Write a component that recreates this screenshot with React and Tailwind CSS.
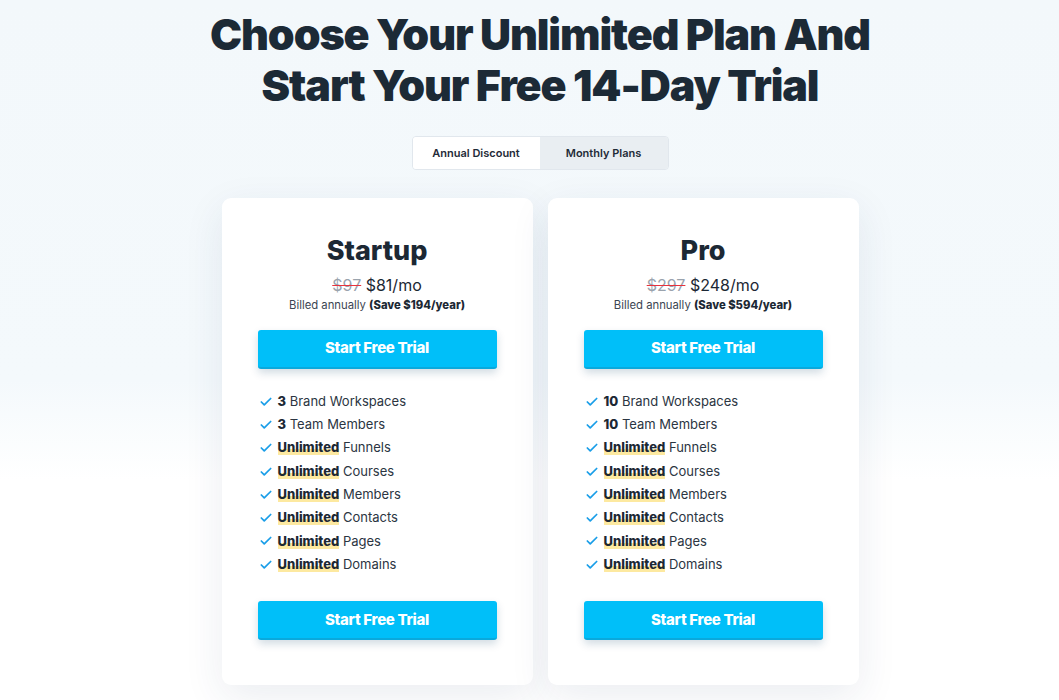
import { Check } from "lucide-react";

const plans = [
  {
    name: "Startup",
    old: "$97",
    price: "$81/mo",
    save: "(Save $194/year)",
    count: "3",
  },
  {
    name: "Pro",
    old: "$297",
    price: "$248/mo",
    save: "(Save $594/year)",
    count: "10",
  },
];

const unlimited = ["Funnels", "Courses", "Members", "Contacts", "Pages", "Domains"];

function TrialButton() {
  return (
    <button className="w-full h-[39px] rounded-[3px] bg-[#00bff9] border-b-2 border-[#0aa9dc] text-white text-[15px] font-extrabold tracking-[-0.3px] shadow-[0_4px_8px_rgba(0,60,100,0.18)]">
      Start Free Trial
    </button>
  );
}

function Feature({ bold, highlight, text }) {
  return (
    <li className="flex items-center h-[23.3px]">
      <Check className="w-[14px] h-[14px] text-[#1a9ee8] mr-[5px] ml-[1px]" strokeWidth={3} />
      <span className="text-[13px] text-[#2b3542] tracking-[0px]">
        <b
          className={
            highlight
              ? "font-extrabold text-[#1c2834] bg-[linear-gradient(transparent_60%,#fde9a0_60%)]"
              : "font-extrabold text-[#1c2834]"
          }
        >
          {bold}
        </b>{" "}
        {text}
      </span>
    </li>
  );
}

function PlanCard({ plan }) {
  return (
    <div className="w-[311px] h-[487px] bg-white rounded-[9px] shadow-[0_12px_40px_rgba(30,60,100,0.09)] px-[36px] pt-[36px] flex flex-col">
      <h2 className="text-center text-[27px] leading-[34px] font-extrabold text-[#1c2834]">
        {plan.name}
      </h2>
      <div className="text-center mt-[7px] text-[16px] leading-[20px] text-[#1c2834]">
        <span className="text-[#9aa3ad] line-through decoration-[#e8323c]">{plan.old}</span>{" "}
        {plan.price}
      </div>
      <div className="text-center mt-[3px] text-[11.3px] leading-[14px] text-[#3b4552]">
        Billed annually <b className="font-extrabold text-[#1c2834]">{plan.save}</b>
      </div>
      <div className="mt-[18px]">
        <TrialButton />
      </div>
      <ul className="mt-[21px] flex flex-col">
        <Feature bold={plan.count} text="Brand Workspaces" />
        <Feature bold={plan.count} text="Team Members" />
        {unlimited.map((u) => (
          <Feature key={u} bold="Unlimited" highlight text={u} />
        ))}
      </ul>
      <div className="mt-[25px]">
        <TrialButton />
      </div>
    </div>
  );
}

export default function App() {
  return (
    <div
      className="min-h-screen bg-[linear-gradient(to_bottom,#f3f8fb_0px,#f4f9fc_380px,#ffffff_480px)] pl-[21px] pb-[15px]"
      style={{ fontFamily: "Inter, 'Noto Sans', sans-serif" }}
    >
      <h1 className="pt-[9px] text-center text-[43px] leading-[51px] font-black tracking-[-1.1px] text-[#1c2a36]">
        Choose Your Unlimited Plan And
        <br />
        Start Your Free 14-Day Trial
      </h1>
      <div className="flex justify-center mt-[25px]">
        <div className="flex h-[34px] rounded-[4px] border border-[#e1e7ed] overflow-hidden text-[11px] font-semibold text-[#1f2b38]">
          <div className="w-[127px] bg-white flex items-center justify-center">Annual Discount</div>
          <div className="w-[128px] bg-[#e9eef2] flex items-center justify-center">Monthly Plans</div>
        </div>
      </div>
      <div className="flex justify-center gap-[15px] mt-[28px]">
        {plans.map((p) => (
          <PlanCard key={p.name} plan={p} />
        ))}
      </div>
    </div>
  );
}
